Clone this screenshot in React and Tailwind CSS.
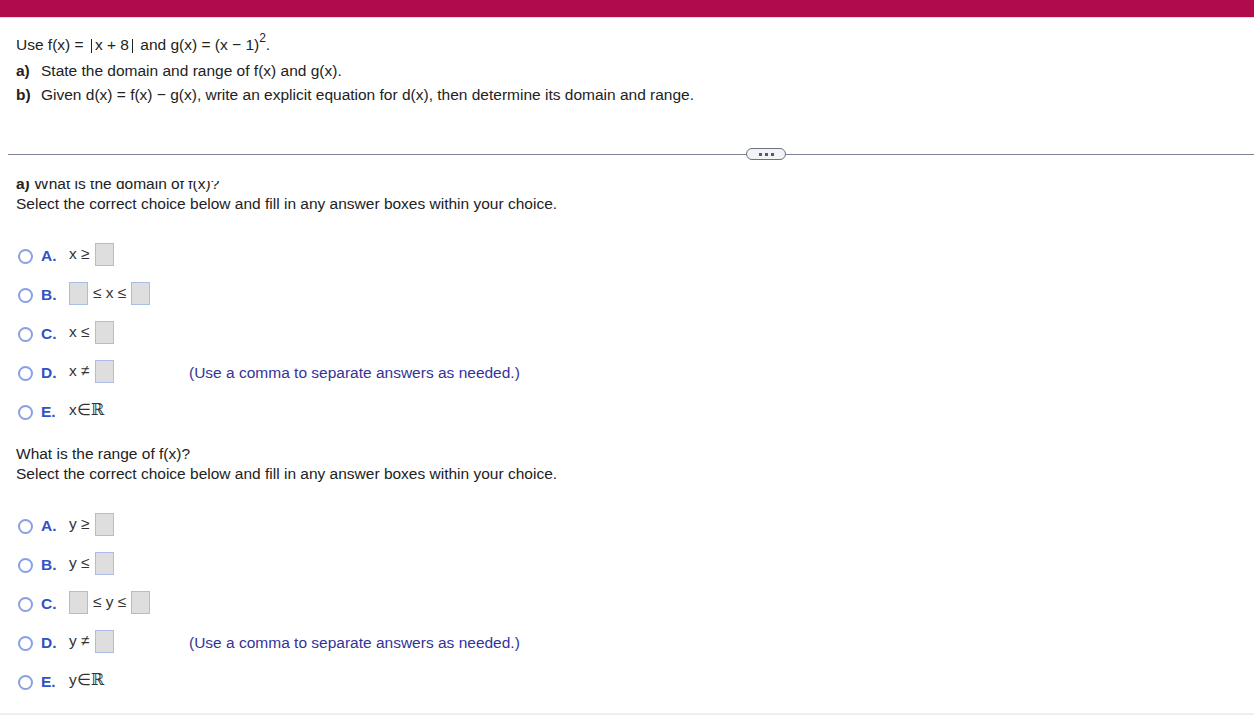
import React from 'react';

const Box = () => (
  <span className="inline-block w-[19px] h-[23px] bg-[#dedede] border border-[#a9bde6] align-middle" />
);

const Radio = () => (
  <span className="inline-block w-[15px] h-[15px] rounded-full border-2 border-[#8aa0e4] bg-white shrink-0" />
);

const Real = () => (
  <span className="font-['DejaVu_Serif',serif] text-[16px]">ℝ</span>
);

const Choice = ({ letter, children, hint }) => (
  <div className="flex items-center h-[24px]">
    <span className="ml-[18px] mr-[8px] flex items-center">
      <Radio />
    </span>
    <span className="w-[28px] font-bold text-[15.5px] text-[#3152c4]">{letter}.</span>
    <span className="w-[120px] flex items-center -mt-[4px] text-[#333]">{children}</span>
    {hint && <span className="text-[#33339a]">{hint}</span>}
  </div>
);

const hint = '(Use a comma to separate answers as needed.)';

export default function App() {
  return (
    <div className="w-[1254px] h-[715px] bg-white overflow-hidden flex flex-col font-['Liberation_Sans',Arial,sans-serif] text-[15.5px] text-[#222]">
      {/* Top bar */}
      <div className="h-[17px] bg-[#b00b4b] shrink-0" />
      <div className="h-px bg-[#d4e2ee] shrink-0" />

      {/* Question */}
      <div className="px-4 pt-[13px] shrink-0">
        <div className="h-[28px] flex items-center">
          <span>Use f(x) =&nbsp;</span>
          <span className="inline-block w-px h-[14px] bg-[#222] mx-[3px] translate-y-[1px]" />
          <span>x + 8</span>
          <span className="inline-block w-px h-[14px] bg-[#222] mx-[3px] translate-y-[1px]" />
          <span>&nbsp;and g(x) = (x − 1)</span>
          <span className="text-[12px] relative -top-[7px]">2</span>
          <span>.</span>
        </div>
        <div className="h-[24px] flex items-center">
          <span className="w-[25px] font-bold">a)</span>
          <span>State the domain and range of f(x) and g(x).</span>
        </div>
        <div className="h-[24px] flex items-center">
          <span className="w-[25px] font-bold">b)</span>
          <span>Given d(x) = f(x) − g(x), write an explicit equation for d(x), then determine its domain and range.</span>
        </div>
      </div>

      {/* Separator */}
      <div className="mt-[41px] h-[12px] flex items-center shrink-0">
        <div className="ml-[8px] w-[738px] h-px bg-[#7b8394]" />
        <button className="w-[40px] h-[12px] rounded-full border border-[#6b7280] bg-[#f1f3f6] flex items-center justify-center gap-[3px]">
          <span className="w-[3px] h-[3px] bg-[#555b66]" />
          <span className="w-[3px] h-[3px] bg-[#555b66]" />
          <span className="w-[3px] h-[3px] bg-[#555b66]" />
        </button>
        <div className="flex-1 h-px bg-[#7b8394]" />
      </div>

      {/* Answer area (scrolled) */}
      <div className="mt-[21px] flex-1 overflow-hidden">
        <div className="-mt-[7px] px-4 leading-[20px]">
          <div>
            <span className="font-bold">a) </span>What is the domain of f(x)?
          </div>
          <div>Select the correct choice below and fill in any answer boxes within your choice.</div>
        </div>

        <div className="mt-[30px] flex flex-col gap-[15px]">
          <Choice letter="A">
            <span className="mr-[5px]">x ≥</span>
            <Box />
          </Choice>
          <Choice letter="B">
            <Box />
            <span className="mx-[5px]">≤ x ≤</span>
            <Box />
          </Choice>
          <Choice letter="C">
            <span className="mr-[5px]">x ≤</span>
            <Box />
          </Choice>
          <Choice letter="D" hint={hint}>
            <span className="mr-[5px]">x ≠</span>
            <Box />
          </Choice>
          <Choice letter="E">
            <span>x∈</span>
            <Real />
          </Choice>
        </div>

        <div className="mt-[20px] px-4 leading-[20px]">
          <div>What is the range of f(x)?</div>
          <div>Select the correct choice below and fill in any answer boxes within your choice.</div>
        </div>

        <div className="mt-[30px] flex flex-col gap-[15px]">
          <Choice letter="A">
            <span className="mr-[5px]">y ≥</span>
            <Box />
          </Choice>
          <Choice letter="B">
            <span className="mr-[5px]">y ≤</span>
            <Box />
          </Choice>
          <Choice letter="C">
            <Box />
            <span className="mx-[5px]">≤ y ≤</span>
            <Box />
          </Choice>
          <Choice letter="D" hint={hint}>
            <span className="mr-[5px]">y ≠</span>
            <Box />
          </Choice>
          <Choice letter="E">
            <span>y∈</span>
            <Real />
          </Choice>
        </div>
      </div>

      <div className="h-[2px] bg-[#efefef] shrink-0" />
    </div>
  );
}
